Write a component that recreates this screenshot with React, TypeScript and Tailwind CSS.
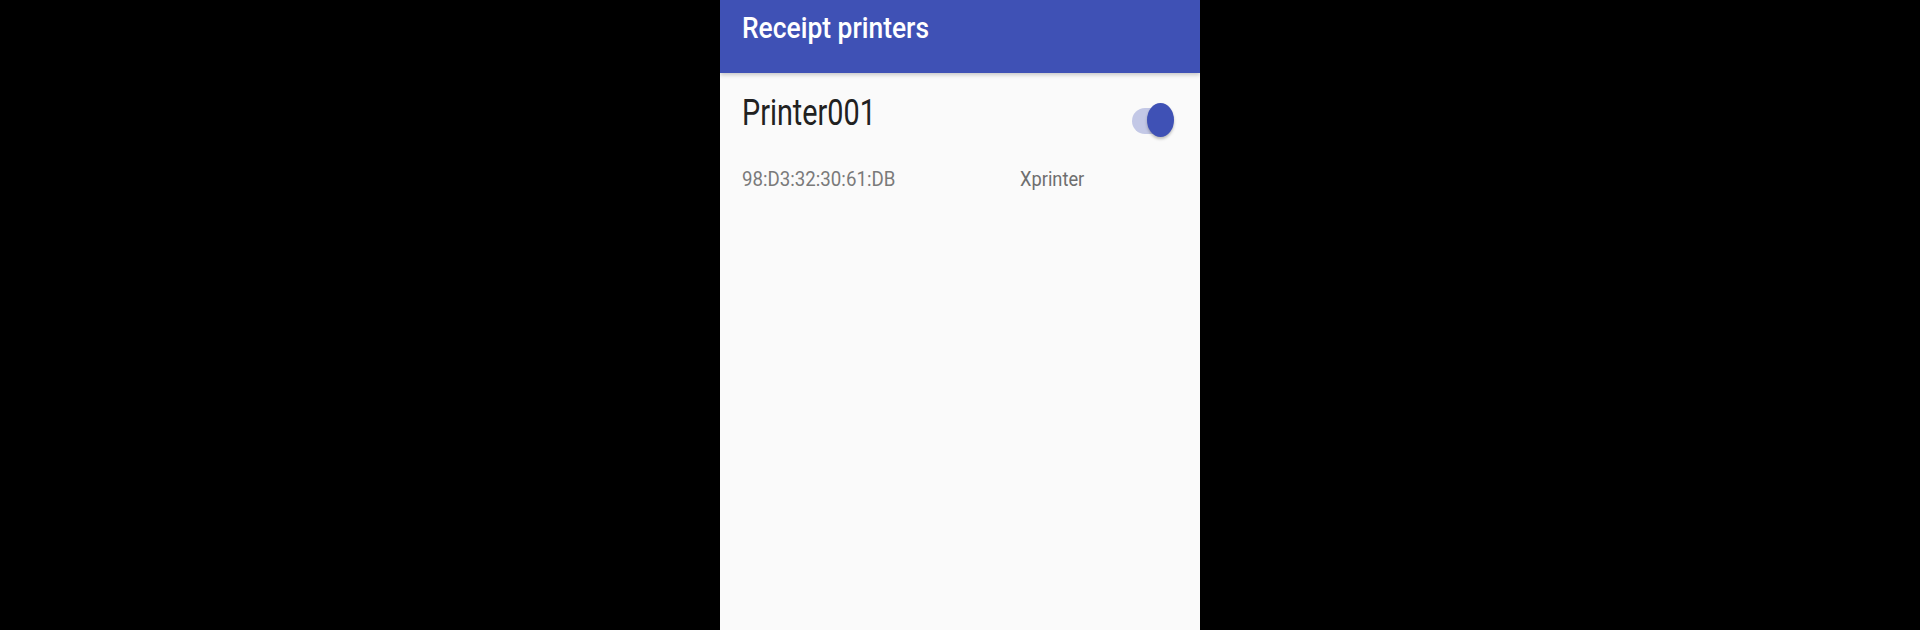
const font = { fontFamily: 'Roboto, "Noto Sans", sans-serif' };

function Toggle({ on }: { on: boolean }) {
  return (
    <div className="relative w-[42px] h-[34px]">
      <div className={`absolute left-0 top-[5px] w-[36px] h-[26px] rounded-full ${on ? 'bg-[#c3c8e6]' : 'bg-gray-300'}`} />
      <div
        className={`absolute top-0 w-[27px] h-[34px] rounded-[50%] shadow-[0_2px_3px_rgba(0,0,0,0.25)] ${
          on ? 'left-[15px] bg-[#3f51b5]' : 'left-0 bg-gray-100'
        }`}
      />
    </div>
  );
}

function PrinterRow() {
  return (
    <div className="px-[22px] pt-[22px] pb-[28px]">
      <div className="flex items-start justify-between">
        <span className="inline-block origin-left scale-x-[0.8] text-[36px] leading-none text-[#212121]">
          Printer001
        </span>
        <div className="mt-[8px] mr-[4px]">
          <Toggle on />
        </div>
      </div>
      <div className="flex mt-[32px] text-[21px] leading-none">
        <div className="w-[278px]">
          <span className="inline-block origin-left scale-x-[0.89] text-[#7a7a7a]">98:D3:32:30:61:DB</span>
        </div>
        <span className="inline-block origin-left scale-x-[0.87] text-[#6e6e6e]">Xprinter</span>
      </div>
    </div>
  );
}

export default function App() {
  return (
    <div className="w-[1920px] h-[630px] bg-black flex justify-center overflow-hidden" style={font}>
      <div className="w-[480px] h-full bg-[#fafafa] flex flex-col">
        <div className="h-[73px] shrink-0 bg-[#3f51b5] px-[22px] pt-[13px] shadow-[0_2px_4px_rgba(0,0,0,0.2)] relative z-10">
          <span className="inline-block origin-left scale-x-[0.88] text-[30px] leading-none font-medium text-white">
            Receipt printers
          </span>
        </div>
        <PrinterRow />
      </div>
    </div>
  );
}
